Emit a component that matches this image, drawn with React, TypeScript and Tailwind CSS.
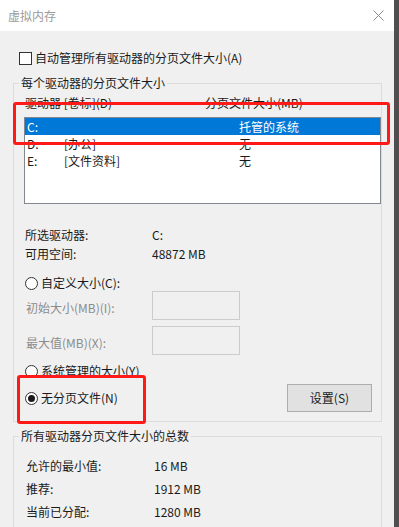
import React from "react";

const font = { fontFamily: '"Noto Sans CJK SC", "Noto Sans", sans-serif' };

function Radio({ checked }: { checked?: boolean }) {
  return (
    <span className="flex h-[13px] w-[13px] shrink-0 items-center justify-center rounded-full border border-[#333333] bg-white">
      {checked && <span className="h-[7px] w-[7px] rounded-full bg-[#1a1a1a]" />}
    </span>
  );
}

function Field({ label }: { label: string }) {
  return (
    <div className="flex h-[29px] items-center">
      <span className="w-[128px] pl-[2px] pt-[4px] text-[#8c8c8c]">{label}</span>
      <div className="h-[29px] w-[88px] border border-[#cccccc] bg-[#f0f0f0]" />
    </div>
  );
}

const drives = [
  { d: "C:", label: "", size: "托管的系统", sel: true },
  { d: "D:", label: "[办公]", size: "无", sel: false },
  { d: "E:", label: "[文件资料]", size: "无", sel: false },
];

const totals = [
  ["允许的最小值:", "16 MB"],
  ["推荐:", "1912 MB"],
  ["当前已分配:", "1280 MB"],
];

export default function App() {
  return (
    <div
      className="relative flex h-[527px] w-[399px] overflow-hidden text-[12px] leading-[16px] text-[#1a1a1a]"
      style={font}
    >
      <div className="flex w-[394px] flex-col">
        {/* title bar */}
        <div className="flex h-[31px] shrink-0 items-center justify-between bg-white pl-[8px] pr-[10px]">
          <span className="text-[#9a9a9a]">虚拟内存</span>
          <svg width="11" height="11" viewBox="0 0 11 11">
            <path d="M0.5 0.5L10.5 10.5M10.5 0.5L0.5 10.5" stroke="#8a8a8a" strokeWidth="1" />
          </svg>
        </div>

        <div className="flex-1 bg-[#f0f0f0] pl-[13px] pr-[12px] pt-[19px]">
          <div className="flex items-center gap-[3px] pl-[6px]">
            <span className="h-[13px] w-[13px] border border-[#333333] bg-white" />
            <span>自动管理所有驱动器的分页文件大小(A)</span>
          </div>

          <fieldset className="mt-[9px] border border-[#dcdcdc] pb-[9px] pl-[10px]">
            <legend className="-ml-[5px] px-[2px]">每个驱动器的分页文件大小</legend>
            <div className="flex pl-[1px] pt-[4px]">
              <span className="w-[180px]">驱动器 [卷标](D)</span>
              <span>分页文件大小(MB)</span>
            </div>

            <div className="mt-[6px] h-[87px] border border-[#828790] bg-white">
              {drives.map((r) => (
                <div
                  key={r.d}
                  className={
                    r.sel
                      ? "flex h-[17px] items-center bg-[#0078d7] pl-[2px] text-white"
                      : "flex h-[17px] items-center pl-[2px]"
                  }
                >
                  <span className="w-[37px]">{r.d}</span>
                  <span className="w-[175px]">{r.label}</span>
                  <span>{r.size}</span>
                </div>
              ))}
            </div>

            <div className="mt-[23px] flex flex-col gap-[3px] pl-[1px]">
              <div className="flex">
                <span className="w-[127px]">所选驱动器:</span>
                <span>C:</span>
              </div>
              <div className="flex">
                <span className="w-[127px]">可用空间:</span>
                <span>48872 MB</span>
              </div>
            </div>

            <div className="mt-[13px] flex items-center gap-[3px] pl-[1px]">
              <Radio />
              <span>自定义大小(C):</span>
            </div>
            <Field label="初始大小(MB)(I):" />
            <div className="mt-[6px]">
              <Field label="最大值(MB)(X):" />
            </div>
            <div className="mt-[8px] flex items-center gap-[3px] pl-[1px]">
              <Radio />
              <span>系统管理的大小(Y)</span>
            </div>
            <div className="mt-[5px] flex h-[28px] items-center justify-between pl-[1px] pr-[9px]">
              <div className="flex items-center gap-[3px]">
                <Radio checked />
                <span>无分页文件(N)</span>
              </div>
              <div className="flex h-[28px] w-[85px] items-center justify-center border border-[#adadad] bg-[#e1e1e1]">
                设置(S)
              </div>
            </div>
          </fieldset>

          <fieldset className="mt-[6px] border border-[#dcdcdc] pb-[20px] pl-[12px]">
            <legend className="-ml-[7px] px-[2px]">所有驱动器分页文件大小的总数</legend>
            <div className="flex flex-col gap-[7px] pt-[14px]">
              {totals.map(([k, v]) => (
                <div key={k} className="flex">
                  <span className="w-[128px]">{k}</span>
                  <span>{v}</span>
                </div>
              ))}
            </div>
          </fieldset>
        </div>
      </div>
      <div className="w-[5px] bg-[#4f4f4f]" />

      {/* red annotation boxes */}
      <div className="absolute left-[13px] top-[102px] h-[43px] w-[377px] rounded-[3px] border-[3px] border-[#ff1a1a]" />
      <div className="absolute left-[17px] top-[375px] h-[49px] w-[129px] rounded-[3px] border-[3px] border-[#ff1a1a]" />
    </div>
  );
}
